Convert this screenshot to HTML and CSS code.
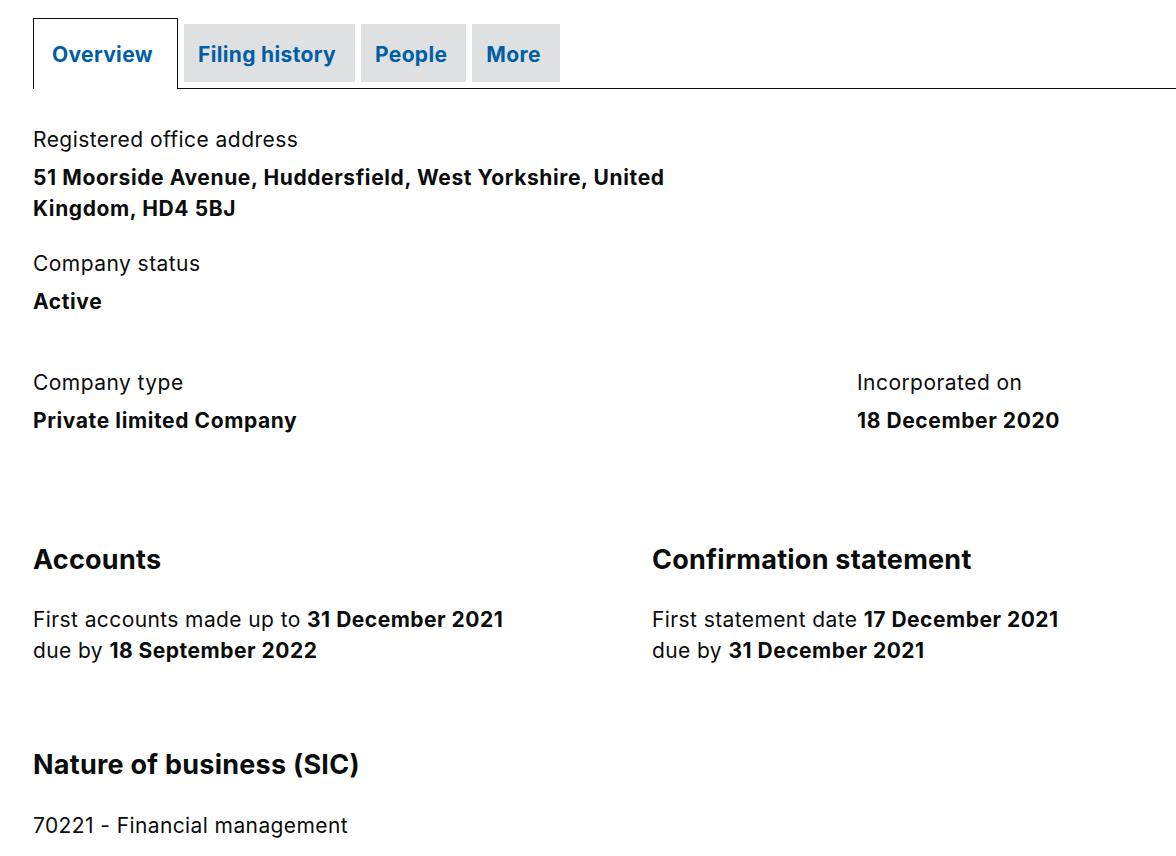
FILE: index.html
```html
<!DOCTYPE html>
<html lang="en">
<head>
<meta charset="utf-8">
<title>Company overview</title>
<link rel="stylesheet" href="styles.css">
</head>
<body>
<main class="page">
  <nav class="tabs">
    <ul class="tab-list">
      <li class="tab tab-active"><a href="#">Overview</a></li>
      <li class="tab"><a href="#">Filing history</a></li>
      <li class="tab"><a href="#">People</a></li>
      <li class="tab"><a href="#">More</a></li>
    </ul>
  </nav>

  <section class="content">
    <dl class="field address">
      <dt class="label">Registered office address</dt>
      <dd class="value">51 Moorside Avenue, Huddersfield, West Yorkshire, United Kingdom, HD4 5BJ</dd>
    </dl>
    <dl class="field status">
      <dt class="label">Company status</dt>
      <dd class="value">Active</dd>
    </dl>

    <div class="row row-type">
      <dl class="field">
        <dt class="label">Company type</dt>
        <dd class="value">Private limited Company</dd>
      </dl>
      <dl class="field">
        <dt class="label">Incorporated on</dt>
        <dd class="value">18 December 2020</dd>
      </dl>
    </div>

    <div class="row row-dates">
      <div class="block">
        <h2 class="heading">Accounts</h2>
        <p class="text">First accounts made up to <strong>31 December 2021</strong><br>due by <strong>18 September 2022</strong></p>
      </div>
      <div class="block">
        <h2 class="heading">Confirmation statement</h2>
        <p class="text">First statement date <strong>17 December 2021</strong><br>due by <strong>31 December 2021</strong></p>
      </div>
    </div>

    <div class="block sic">
      <h2 class="heading">Nature of business (SIC)</h2>
      <p class="text">70221 - Financial management</p>
    </div>
  </section>
</main>
</body>
</html>
```

FILE: styles.css
```css
* { box-sizing: border-box; }

html, body {
  margin: 0;
  padding: 0;
  background: #ffffff;
}

body {
  font-family: "Inter", "Liberation Sans", Arial, sans-serif;
  color: #0b0c0c;
  overflow: hidden;
}

.page {
  padding: 18px 0 0 33px;
}

.tabs {
  border-bottom: 1px solid #0b0c0c;
}

.tab-list {
  list-style: none;
  margin: 0;
  padding: 0;
  display: flex;
  align-items: flex-start;
  gap: 6px;
}

.tab {
  margin: 6px 0 6px;
  background: #dee0e2;
  height: 58px;
  display: flex;
  align-items: center;
  padding: 2px 19px 0 14px;
}

.tab a {
  color: #005ea5;
  font-weight: 700;
  font-size: 21px;
  letter-spacing: 0.35px;
  text-decoration: none;
  line-height: 1;
}

.tab-active {
  background: #ffffff;
  margin: 0 0 -1px;
  height: 71px;
  border: 1px solid #0b0c0c;
  border-bottom: none;
  padding: 0 24px 0 18px;
}

.content {
  padding-top: 36px;
}

.field {
  margin: 0;
}

.label {
  font-size: 21px;
  line-height: 30px;
  font-weight: 400;
  letter-spacing: 0.45px;
}

.value {
  margin: 7px 0 0;
  font-size: 21px;
  line-height: 31px;
  font-weight: 700;
  letter-spacing: 0.6px;
}

.address {
  max-width: 660px;
}

.status {
  margin-top: 25px;
}

.row {
  display: grid;
}

.row-type {
  grid-template-columns: 824px 1fr;
  margin-top: 51px;
}

.row-dates {
  grid-template-columns: 619px 1fr;
  margin-top: 106px;
}

.heading {
  margin: 0;
  font-size: 27px;
  line-height: 35px;
  font-weight: 700;
  letter-spacing: 0.25px;
}

.text {
  margin: 27px 0 0;
  font-size: 21px;
  line-height: 31px;
  letter-spacing: 0.4px;
}

.text strong {
  font-weight: 700;
  letter-spacing: 0.5px;
}

.sic {
  margin-top: 81px;
}

.sic .text {
  margin-top: 28px;
}
```
